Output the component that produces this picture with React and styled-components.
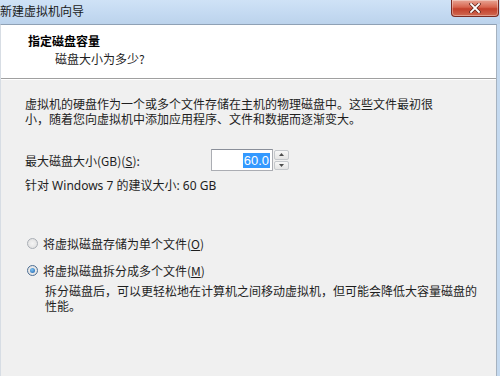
import React from 'react';
import styled, { createGlobalStyle } from 'styled-components';

const Global = createGlobalStyle`
  html, body { margin: 0; padding: 0; }
  body {
    width: 500px;
    height: 376px;
    overflow: hidden;
    font-family: "Noto Sans CJK SC", "Noto Sans", sans-serif;
    font-size: 12px;
    color: #1e1e1e;
  }
`;

const Window = styled.div`
  width: 500px;
  height: 376px;
  display: flex;
  flex-direction: column;
  background: #c4d9ef;
`;

const TitleBar = styled.div`
  height: 24px;
  display: flex;
  justify-content: space-between;
  align-items: flex-start;
  background: linear-gradient(to bottom, #cfe2f6 0%, #c3d9f1 60%, #bcd3ec 100%);
`;

const Title = styled.span`
  padding: 3px 0 0 0;
  font-size: 12px;
  line-height: 16px;
  color: #1a1a1a;
`;

const CloseButton = styled.div`
  width: 46px;
  height: 16px;
  margin-right: 1px;
  border: 1px solid #7a2b22;
  border-top: none;
  border-radius: 0 0 4px 4px;
  background: linear-gradient(to bottom, #e8a595 0%, #d7644e 45%, #c3402b 55%, #d06a52 100%);
  display: flex;
  align-items: center;
  justify-content: center;
  box-shadow: inset 0 0 0 1px rgba(255, 255, 255, 0.35);
`;

const Frame = styled.div`
  flex: 1;
  display: flex;
  padding: 0 3px 0 0;
`;

const Client = styled.div`
  flex: 1;
  display: flex;
  flex-direction: column;
  border-top: 1px solid #8fa1b5;
  border-left: 1px solid #d7dde4;
  border-right: 1px solid #a6b2bf;
  background: #f0f0f0;
`;

const Header = styled.div`
  height: 54px;
  background: #ffffff;
  border-bottom: 1px solid #a0a0a0;
  box-shadow: 0 1px 0 #ffffff;
  padding: 8px 0 0 27px;
  box-sizing: border-box;
`;

const HeaderTitle = styled.div`
  font-weight: bold;
  line-height: 16px;
  color: #000;
`;

const HeaderSub = styled.div`
  margin: 2px 0 0 27px;
  line-height: 16px;
  color: #1e1e1e;
`;

const Body = styled.div`
  flex: 1;
  padding: 17px 0 0 24px;
  display: flex;
  flex-direction: column;
`;

const Para = styled.p`
  margin: 0;
  width: 420px;
  line-height: 15px;
`;

const SizeRow = styled.div`
  margin-top: 23px;
  display: flex;
  align-items: center;
  height: 22px;
`;

const Label = styled.span`
  width: 186px;
  line-height: 15px;
`;

const U = styled.span`
  text-decoration: underline;
`;

const Spin = styled.div`
  display: flex;
  height: 22px;
`;

const SpinInput = styled.div`
  width: 58px;
  height: 20px;
  border: 1px solid #abadb3;
  border-top-color: #8a8f99;
  background: #fff;
  display: flex;
  align-items: center;
  justify-content: flex-end;
  padding-right: 2px;
`;

const Selected = styled.span`
  background: #3399ff;
  color: #fff;
  font-family: "Liberation Sans", "Noto Sans", sans-serif;
  font-size: 13px;
  line-height: 15px;
  padding: 0 1px;
`;

const Arrows = styled.div`
  width: 15px;
  display: flex;
  flex-direction: column;
  gap: 1px;
  padding: 1px 0 1px 1px;
`;

const ArrowBtn = styled.div`
  flex: 1;
  border: 1px solid #c5c8cc;
  border-radius: 2px;
  background: linear-gradient(to bottom, #f7f7f7, #e4e4e4);
  display: flex;
  align-items: center;
  justify-content: center;
`;

const Note = styled.div`
  margin-top: 7px;
  line-height: 15px;
  font-family: "Noto Sans", "Noto Sans CJK SC", sans-serif;
`;

const Options = styled.div`
  margin-top: 43px;
  display: flex;
  flex-direction: column;
  gap: 12px;
`;

const Radio = styled.label`
  display: flex;
  align-items: center;
  gap: 5px;
  line-height: 15px;
  padding-left: 2px;
`;

const Dot = styled.span`
  width: 11px;
  height: 11px;
  border-radius: 50%;
  box-sizing: border-box;
  border: 1px solid ${(p) => (p.$on ? '#4e6f94' : '#a9aeb5')};
  background: radial-gradient(circle, #f4f4f4 0%, #dcdcdc 100%);
  display: flex;
  align-items: center;
  justify-content: center;
  &::after {
    content: '';
    width: 5px;
    height: 5px;
    border-radius: 50%;
    background: ${(p) => (p.$on ? 'radial-gradient(circle at 40% 35%, #7fc4f4, #1a5ea8)' : 'transparent')};
  }
`;

const Desc = styled.p`
  margin: 5px 0 0 20px;
  width: 440px;
  line-height: 15px;
`;

export default function App() {
  return (
    <>
      <Global />
      <Window>
        <TitleBar>
          <Title>新建虚拟机向导</Title>
          <CloseButton>
            <svg width="12" height="10" viewBox="0 0 12 10">
              <path d="M2 1 L10 9 M10 1 L2 9" stroke="#5a2118" strokeWidth="3.2" strokeLinecap="square" />
              <path d="M2 1 L10 9 M10 1 L2 9" stroke="#ffffff" strokeWidth="1.8" strokeLinecap="square" />
            </svg>
          </CloseButton>
        </TitleBar>
        <Frame>
          <Client>
            <Header>
              <HeaderTitle>指定磁盘容量</HeaderTitle>
              <HeaderSub>磁盘大小为多少?</HeaderSub>
            </Header>
            <Body>
              <Para>
                虚拟机的硬盘作为一个或多个文件存储在主机的物理磁盘中。这些文件最初很小，随着您向虚拟机中添加应用程序、文件和数据而逐渐变大。
              </Para>
              <SizeRow>
                <Label>最大磁盘大小(GB)(<U>S</U>):</Label>
                <Spin>
                  <SpinInput>
                    <Selected>60.0</Selected>
                  </SpinInput>
                  <Arrows>
                    <ArrowBtn>
                      <svg width="5" height="3" viewBox="0 0 5 3"><path d="M0 3 L2.5 0 L5 3 Z" fill="#4d4d4d" /></svg>
                    </ArrowBtn>
                    <ArrowBtn>
                      <svg width="5" height="3" viewBox="0 0 5 3"><path d="M0 0 L2.5 3 L5 0 Z" fill="#4d4d4d" /></svg>
                    </ArrowBtn>
                  </Arrows>
                </Spin>
              </SizeRow>
              <Note>针对 Windows 7 的建议大小: 60 GB</Note>
              <Options>
                <Radio>
                  <Dot />
                  <span>将虚拟磁盘存储为单个文件(<U>O</U>)</span>
                </Radio>
                <Radio>
                  <Dot $on />
                  <span>将虚拟磁盘拆分成多个文件(<U>M</U>)</span>
                </Radio>
              </Options>
              <Desc>
                拆分磁盘后，可以更轻松地在计算机之间移动虚拟机，但可能会降低大容量磁盘的性能。
              </Desc>
            </Body>
          </Client>
        </Frame>
      </Window>
    </>
  );
}
